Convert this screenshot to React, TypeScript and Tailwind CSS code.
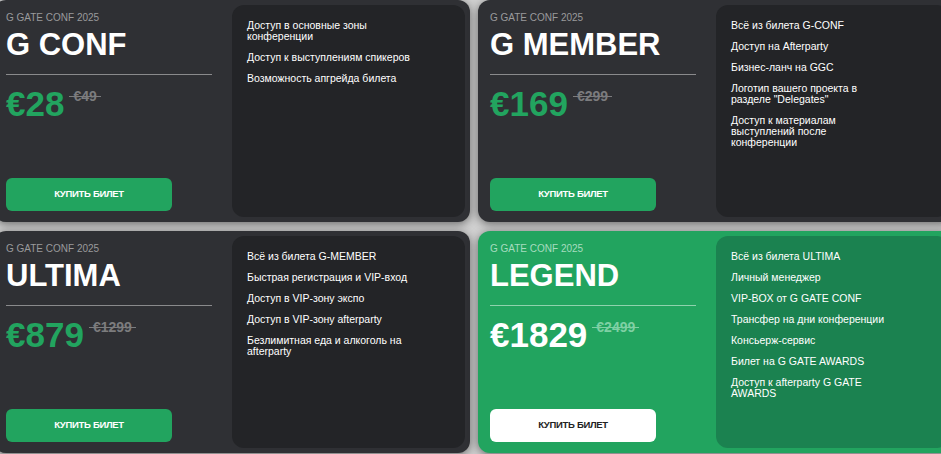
import React from "react";

type Ticket = {
  name: string;
  price: string;
  old: string;
  items: string[][];
  featured?: boolean;
};

const tickets: Ticket[] = [
  {
    name: "G CONF",
    price: "€28",
    old: "€49",
    items: [
      ["Доступ в основные зоны", "конференции"],
      ["Доступ к выступлениям спикеров"],
      ["Возможность апгрейда билета"],
    ],
  },
  {
    name: "G MEMBER",
    price: "€169",
    old: "€299",
    items: [
      ["Всё из билета G-CONF"],
      ["Доступ на Afterparty"],
      ["Бизнес-ланч на GGC"],
      ["Логотип вашего проекта в", 'разделе "Delegates"'],
      ["Доступ к материалам", "выступлений после", "конференции"],
    ],
  },
  {
    name: "ULTIMA",
    price: "€879",
    old: "€1299",
    items: [
      ["Всё из билета G-MEMBER"],
      ["Быстрая регистрация и VIP-вход"],
      ["Доступ в VIP-зону экспо"],
      ["Доступ в VIP-зону afterparty"],
      ["Безлимитная еда и алкоголь на", "afterparty"],
    ],
  },
  {
    name: "LEGEND",
    price: "€1829",
    old: "€2499",
    featured: true,
    items: [
      ["Всё из билета ULTIMA"],
      ["Личный менеджер"],
      ["VIP-BOX от G GATE CONF"],
      ["Трансфер на дни конференции"],
      ["Консьерж-сервис"],
      ["Билет на G GATE AWARDS"],
      ["Доступ к afterparty G GATE", "AWARDS"],
    ],
  },
];

function TicketCard({ t }: { t: Ticket }) {
  const f = t.featured;
  return (
    <div
      className={`flex h-[222px] rounded-[12px] p-[5px] shadow-[0_2px_10px_rgba(0,0,0,0.5)] ${
        f ? "bg-[#22a45f]" : "bg-[#2f3034]"
      }`}
    >
      {/* левая часть */}
      <div className="flex w-[233px] shrink-0 flex-col pl-[7px] pr-[10px] pt-[7px] pb-[6px]">
        <p className={`text-[10px] leading-[12px] ${f ? "text-[#a6dcbf]" : "text-[#9a9a9c]"}`}>
          G GATE CONF 2025
        </p>
        <p className="mt-[4px] text-[31px] font-bold leading-[33px] text-white">{t.name}</p>
        <div className={`mt-[13px] h-px w-[206px] ${f ? "bg-[#8fd2ad]" : "bg-[#8a8a8c]"}`} />
        <div className="mt-[12px] flex items-start">
          <span
            className={`text-[35px] font-bold leading-[34px] ${f ? "text-white" : "text-[#22a45f]"}`}
          >
            {t.price}
          </span>
          <span
            className={`relative ml-[9px] mt-[2px] text-[14px] font-bold leading-[14px] ${
              f ? "text-[#7fd0a4]" : "text-[#7c7c7e]"
            }`}
          >
            {t.old}
            <span
              className={`absolute left-[-4px] right-[-4px] top-[7px] h-px ${
                f ? "bg-[#7fd0a4]" : "bg-[#7c7c7e]"
              }`}
            />
          </span>
        </div>
        <button
          className={`mt-auto flex h-[33px] w-[166px] items-center justify-center rounded-[6px] text-[9.5px] font-bold tracking-[-0.3px] ${
            f ? "bg-white text-[#222]" : "bg-[#22a45f] text-white"
          }`}
        >
          КУПИТЬ БИЛЕТ
        </button>
      </div>

      {/* правая часть */}
      <div
        className={`flex flex-1 flex-col gap-[10px] rounded-[12px] pl-[15px] pt-[15px] ${
          f ? "bg-[#1b8250]" : "bg-[#232427]"
        }`}
      >
        {t.items.map((lines, i) => (
          <p key={i} className="whitespace-nowrap text-[10.5px] leading-[11px] text-white">
            {lines.map((l, j) => (
              <React.Fragment key={j}>
                {j > 0 && <br />}
                {l}
              </React.Fragment>
            ))}
          </p>
        ))}
      </div>
    </div>
  );
}

export default function App() {
  return (
    <div
      className="h-[454px] w-[941px] overflow-hidden bg-[#d2d2d2]"
      style={{ fontFamily: '"Liberation Sans", Arial, sans-serif' }}
    >
      <div className="ml-[-6px] grid w-[960px] grid-cols-2 gap-x-[8px] gap-y-[9px]">
        {tickets.map((t) => (
          <TicketCard key={t.name} t={t} />
        ))}
      </div>
    </div>
  );
}
